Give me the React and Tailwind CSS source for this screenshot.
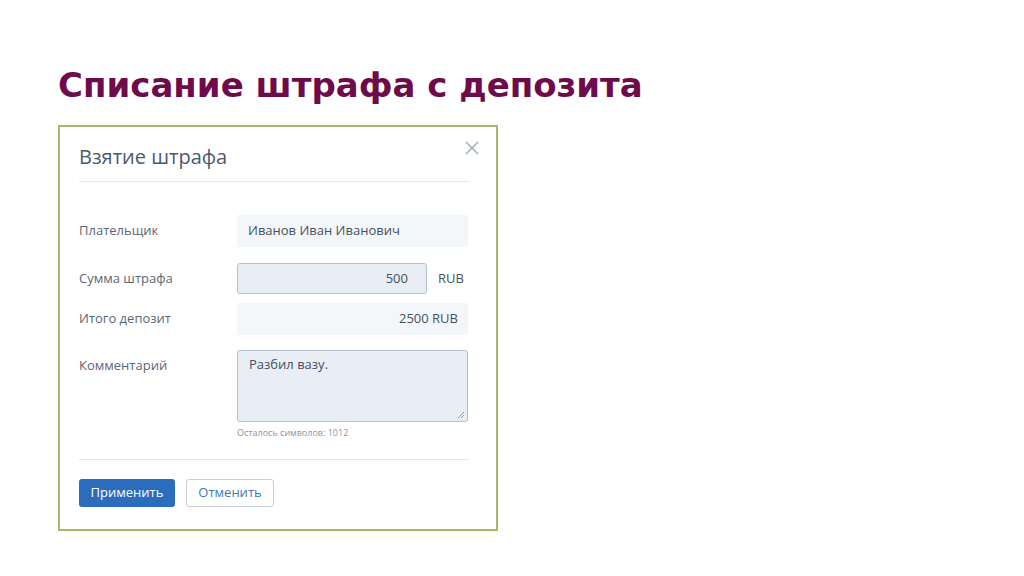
const Field = ({ label, children, className = "" }) => (
  <div className={"flex items-start " + className}>
    <div className="w-[158px] shrink-0 pt-[6px] text-[13px] text-[#5b6774]">{label}</div>
    <div className="w-[231px]">{children}</div>
  </div>
);

const App = () => {
  return (
    <div className="w-[1024px] h-[576px] bg-white pl-[58px] pt-[64px]" style={{ fontFamily: "'Open Sans', sans-serif" }}>
      <h1
        className="text-[34px] leading-[42px] font-bold text-[#6e0b4a]"
        style={{ fontFamily: "'DejaVu Sans', sans-serif" }}
      >
        Списание штрафа с депозита
      </h1>

      <div className="mt-[19px] w-[440px] h-[406px] border-2 border-[#a7b86c] pl-[19px] pr-[27px] pt-[16px]">
        <div className="relative flex items-center h-[28px]">
          <h2 className="text-[20px] text-[#4a5b6c]">Взятие штрафа</h2>
          <svg className="absolute right-[-10px] top-[-2px]" width="14" height="14" viewBox="0 0 14 14">
            <path d="M1 1L13 13M13 1L1 13" stroke="#9aa6b3" strokeWidth="1.4" />
          </svg>
        </div>
        <div className="mt-[10px] h-px bg-[#e3e7eb]" />

        <Field label="Плательщик" className="mt-[33px]">
          <div className="h-[32px] bg-[#f4f7fa] px-[11px] flex items-center text-[13px] text-[#46505a]">
            Иванов Иван Иванович
          </div>
        </Field>

        <Field label="Сумма штрафа" className="mt-[16px]">
          <div className="flex items-center">
            <div className="w-[190px] h-[31px] rounded-[3px] border border-[#b5c0cc] bg-[#e9eef6] px-[18px] flex items-center justify-end text-[13px] text-[#46505a]">
              500
            </div>
            <span className="ml-[11px] text-[13px] text-[#46505a]">RUB</span>
          </div>
        </Field>

        <Field label="Итого депозит" className="mt-[9px]">
          <div className="h-[32px] bg-[#f4f7fa] px-[10px] flex items-center justify-end text-[13px] text-[#46505a]">
            2500 RUB
          </div>
        </Field>

        <Field label="Комментарий" className="mt-[15px]">
          <div className="relative h-[72px] rounded-[3px] border border-[#b5c0cc] bg-[#e9eef6] px-[11px] pt-[4px] text-[13px] text-[#46505a]">
            Разбил вазу.
            <svg className="absolute right-[2px] bottom-[2px]" width="8" height="8" viewBox="0 0 8 8">
              <path d="M7 1L1 7M7 4L4 7" stroke="#8a949e" strokeWidth="0.9" />
            </svg>
          </div>
          <div className="mt-[4px] text-[9px] text-[#8b949c]">Осталось символов: 1012</div>
        </Field>

        <div className="mt-[19px] h-px bg-[#e3e7eb]" />

        <div className="mt-[19px] flex gap-[11px]">
          <button className="w-[96px] h-[28px] rounded-[3px] bg-[#2b6cbd] text-white text-[13px]">Применить</button>
          <button className="w-[88px] h-[28px] rounded-[3px] border border-[#c8d1da] bg-white text-[#3f78b8] text-[13px]">
            Отменить
          </button>
        </div>
      </div>
    </div>
  );
};

export default App;
